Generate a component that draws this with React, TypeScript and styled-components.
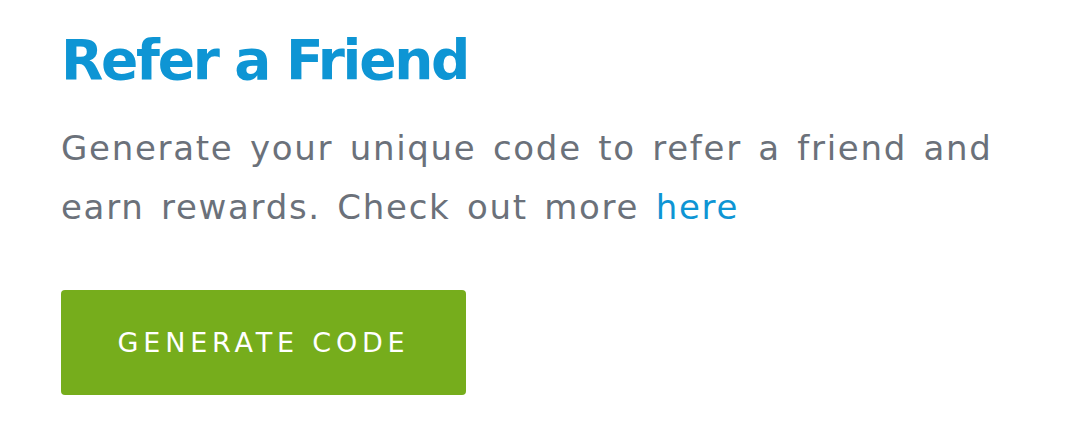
import styled, { createGlobalStyle } from 'styled-components';

const GlobalStyle = createGlobalStyle`
  html, body {
    margin: 0;
    padding: 0;
    background: #ffffff;
  }
  body {
    font-family: 'DejaVu Sans', 'Liberation Sans', sans-serif;
  }
`;

export default function App() {
  return (
    <>
      <GlobalStyle />
      <Card>
        <Title>Refer a Friend</Title>
        <Description>
          Generate your unique code to refer a friend and earn rewards. Check out more{' '}
          <Link href="#">here</Link>
        </Description>
        <GenerateButton type="button">GENERATE CODE</GenerateButton>
      </Card>
    </>
  );
}

const Card = styled.div`
  display: flex;
  flex-direction: column;
  align-items: flex-start;
  padding: 27px 61px 0;
  width: 960px;
`;

const Title = styled.h1`
  margin: 0;
  font-size: 55px;
  font-weight: 700;
  line-height: 66px;
  color: #0e95d4;
  letter-spacing: -2.3px;
`;

const Description = styled.p`
  margin: 26px 0 0;
  font-size: 34px;
  line-height: 59px;
  letter-spacing: 1.7px;
  word-spacing: 4px;
  color: #6b717a;
  max-width: 950px;
`;

const Link = styled.a`
  color: #0e95d4;
  text-decoration: none;
`;

const GenerateButton = styled.button`
  margin-top: 53px;
  width: 405px;
  height: 105px;
  padding: 0;
  border: none;
  border-radius: 4px;
  background: #76ad1c;
  color: #ffffff;
  font-family: inherit;
  font-size: 27px;
  letter-spacing: 4.8px;
  cursor: pointer;
`;
